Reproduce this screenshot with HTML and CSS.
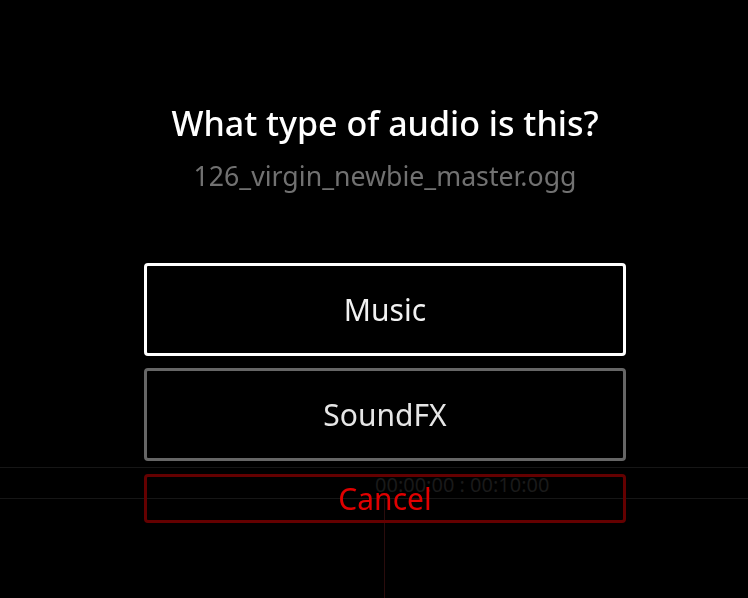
FILE: index.html
```html
<!DOCTYPE html>
<html lang="en">
<head>
<meta charset="utf-8">
<title>What type of audio is this?</title>
<link rel="stylesheet" href="styles.css">
</head>
<body>
<div class="app">
  <div class="timeline">
    <span class="timecode">00:00:00 : 00:10:00</span>
  </div>
  <div class="playhead"></div>
</div>
<div class="overlay">
  <div class="dialog">
    <h1 class="title">What type of audio is this?</h1>
    <p class="filename">126_virgin_newbie_master.ogg</p>
    <div class="choices">
      <button class="choice choice-selected">Music</button>
      <button class="choice">SoundFX</button>
      <button class="choice choice-cancel">Cancel</button>
    </div>
  </div>
</div>
</body>
</html>
```
FILE: styles.css
```css
html, body {
  margin: 0;
  padding: 0;
  background: #000;
  width: 748px;
  height: 598px;
  overflow: hidden;
  font-family: "Noto Sans", "Open Sans", sans-serif;
}

.app {
  display: flex;
  flex-direction: column;
  height: 598px;
  padding-top: 467px;
  box-sizing: border-box;
}

.timeline {
  height: 32px;
  border-top: 1px solid #161616;
  border-bottom: 1px solid #161616;
  display: flex;
  padding-left: 375px;
  padding-top: 4px;
  box-sizing: border-box;
  align-items: center;
}

.timecode {
  color: #1a1a1a;
  font-size: 20px;
  line-height: 1;
}

.playhead {
  flex: 1;
  margin-left: 384px;
  width: 1px;
  background: #2a0c0c;
}

.overlay {
  position: fixed;
  inset: 0;
}

.dialog {
  width: 482px;
  margin-left: 144px;
  padding-top: 102px;
  display: flex;
  flex-direction: column;
  align-items: center;
}

.title {
  margin: 0;
  color: #fff;
  font-size: 34px;
  font-weight: 500;
  line-height: 42px;
  white-space: nowrap;
}

.filename {
  margin: 17px 0 0;
  color: #717171;
  font-size: 26.7px;
  line-height: 30px;
  white-space: nowrap;
}

.choices {
  align-self: stretch;
  margin-top: 72px;
  display: flex;
  flex-direction: column;
  gap: 12px;
}

.choice {
  display: flex;
  align-items: center;
  justify-content: center;
  height: 93px;
  margin: 0;
  padding: 0;
  background: #000;
  border: 3px solid #666;
  border-radius: 4px;
  color: #e6e6e6;
  font-family: inherit;
  font-size: 30px;
  box-sizing: border-box;
}

.choice-selected {
  border-color: #fff;
  color: #f2f2f2;
}

.choice-cancel {
  height: 49px;
  margin-top: 1px;
  background: transparent;
  border-color: #640000;
  color: #e00000;
}
```
